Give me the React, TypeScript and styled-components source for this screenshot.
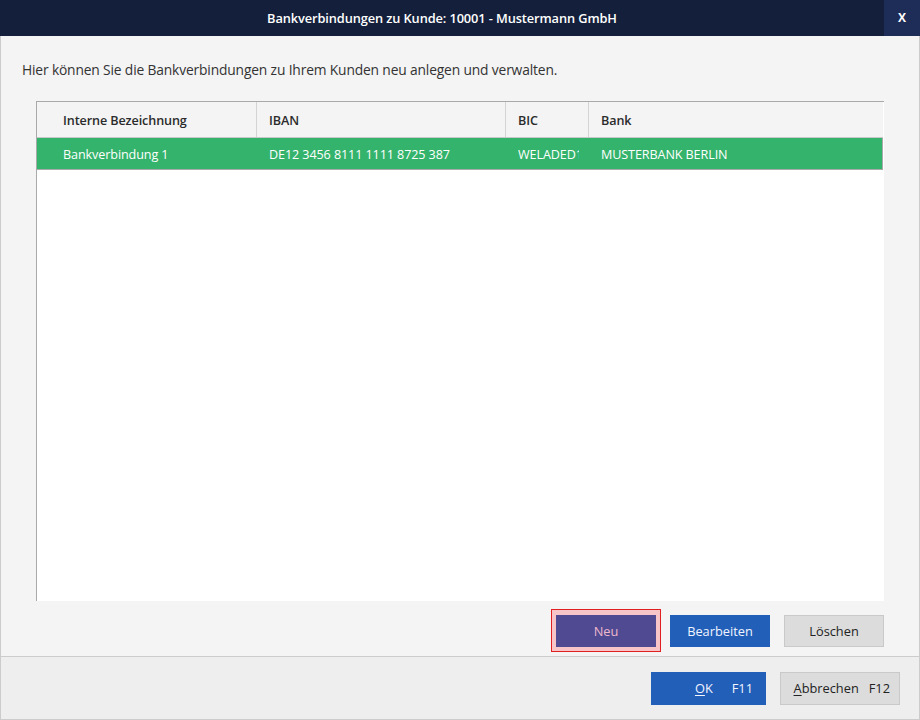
import React from "react";
import styled, { createGlobalStyle } from "styled-components";

const Global = createGlobalStyle`
  html, body { margin: 0; padding: 0; background: #f4f4f4; }
  body { font-family: "Open Sans", "Noto Sans", "Liberation Sans", sans-serif; }
  * { box-sizing: border-box; }
`;

const Window = styled.div`
  width: 920px;
  height: 720px;
  display: flex;
  flex-direction: column;
  font-family: "Open Sans", "Noto Sans", "Liberation Sans", sans-serif;
`;

const TitleBar = styled.div`
  height: 36px;
  flex: none;
  background: #141f3b;
  display: grid;
  grid-template-columns: 1fr 36px;
  align-items: stretch;
`;

const Title = styled.div`
  color: #ffffff;
  font-size: 12.8px;
  font-weight: 600;
  display: flex;
  align-items: center;
  justify-content: center;
  letter-spacing: -0.1px;
`;

const CloseButton = styled.button`
  border: none;
  margin: 0;
  padding: 0 0 1px 0;
  background: #1e2c58;
  color: #ffffff;
  font-family: inherit;
  font-size: 12px;
  font-weight: 700;
  display: flex;
  align-items: center;
  justify-content: center;
  cursor: pointer;
`;

const Body = styled.div`
  flex: 1;
  background: #f4f4f4;
  border-left: 1px solid #cccccc;
  border-right: 1px solid #cccccc;
  display: flex;
  flex-direction: column;
  padding: 0 35px 0 35px;
`;

const Description = styled.p`
  margin: 24px 0 0 -14px;
  height: 41px;
  font-size: 13.8px;
  color: #333333;
  line-height: 20px;
  letter-spacing: -0.15px;
`;

const TableBox = styled.div`
  height: 500px;
  flex: none;
  background: #ffffff;
  border-top: 1px solid #a9a9a9;
  border-left: 1px solid #a9a9a9;
  display: flex;
  flex-direction: column;
`;

const columns = "220px 249px 83px 1fr";

const HeaderRow = styled.div`
  display: grid;
  grid-template-columns: ${columns};
  height: 36px;
  background: #f4f4f4;
  border-bottom: 1px solid #c8c8c8;
  margin-right: 1px;
`;

const HeaderCell = styled.div<{ $first?: boolean; $last?: boolean }>`
  display: flex;
  align-items: center;
  padding-top: 2px;
  padding-left: ${(p) => (p.$first ? "26px" : "12px")};
  border-right: ${(p) => (p.$last ? "none" : "1px solid #d4d4d4")};
  font-size: 12.6px;
  font-weight: 600;
  color: #2b2b2b;
  letter-spacing: -0.1px;
`;

const DataRow = styled.div<{ $selected?: boolean }>`
  display: grid;
  grid-template-columns: ${columns};
  height: 32px;
  margin-right: 1px;
  background: ${(p) => (p.$selected ? "#33b36b" : "#ffffff")};
  border-right: 1px solid #a9a9a9;
  border-bottom: 1px solid #a9a9a9;
`;

const DataCell = styled.div<{ $first?: boolean; $selected?: boolean }>`
  display: flex;
  align-items: center;
  min-width: 0;
  padding-top: 1px;
  padding-left: ${(p) => (p.$first ? "26px" : "12px")};
  padding-right: 10px;
  font-size: 12.6px;
  color: ${(p) => (p.$selected ? "#ffffff" : "#333333")};
  letter-spacing: -0.1px;
`;

const CellText = styled.span`
  display: block;
  white-space: nowrap;
  overflow: hidden;
  min-width: 0;
`;

const ActionRow = styled.div`
  display: flex;
  justify-content: flex-end;
  align-items: flex-start;
  gap: 14px;
  flex: 1;
  padding-top: 14px;
`;

const FocusRing = styled.div`
  border: 1px solid #e02020;
  background: #f7c4c8;
  padding: 5px 4px 4px 4px;
  margin: -6px -5px 0 -5px;
`;

const Button = styled.button<{ $variant: "primary" | "accent" | "neutral"; $w: number }>`
  width: ${(p) => p.$w}px;
  height: 32px;
  margin: 0;
  font-family: inherit;
  font-size: 12.8px;
  font-weight: 500;
  cursor: pointer;
  display: flex;
  align-items: center;
  justify-content: center;
  padding: 0;
  border: 1px solid
    ${(p) => (p.$variant === "neutral" ? "#c9c9c9" : p.$variant === "accent" ? "#4f4a92" : "#215fb8")};
  background: ${(p) =>
    p.$variant === "neutral" ? "#dcdcdc" : p.$variant === "accent" ? "#4f4a92" : "#215fb8"};
  color: ${(p) =>
    p.$variant === "neutral" ? "#222222" : p.$variant === "accent" ? "#efb8cc" : "#f2f4ff"};
`;

const Footer = styled.div`
  height: 64px;
  flex: none;
  background: #eeeeee;
  border: 1px solid #cccccc;
  display: flex;
  justify-content: flex-end;
  align-items: center;
  gap: 14px;
  padding: 0 19px 0 0;
`;

const FooterButton = styled(Button)<{ $gap: number }>`
  justify-content: flex-end;
  gap: ${(p) => p.$gap}px;
  padding-right: ${(p) => (p.$gap > 15 ? 12 : 9)}px;
  height: 33px;
`;

const Key = styled.span`
  font-weight: 400;
`;

const Mnemonic = styled.span`
  text-decoration: underline;
  text-underline-offset: 2px;
`;

export default function App() {
  return (
    <>
      <Global />
      <Window>
        <TitleBar>
          <Title>Bankverbindungen zu Kunde: 10001 - Mustermann GmbH</Title>
          <CloseButton aria-label="Schließen">X</CloseButton>
        </TitleBar>
        <Body>
          <Description>Hier können Sie die Bankverbindungen zu Ihrem Kunden neu anlegen und verwalten.</Description>
          <TableBox>
            <HeaderRow>
              <HeaderCell $first>Interne Bezeichnung</HeaderCell>
              <HeaderCell>IBAN</HeaderCell>
              <HeaderCell>BIC</HeaderCell>
              <HeaderCell $last>Bank</HeaderCell>
            </HeaderRow>
            <DataRow $selected>
              <DataCell $first $selected><CellText>Bankverbindung 1</CellText></DataCell>
              <DataCell $selected><CellText>DE12 3456 8111 1111 8725 387</CellText></DataCell>
              <DataCell $selected><CellText>WELADED1</CellText></DataCell>
              <DataCell $selected><CellText>MUSTERBANK BERLIN</CellText></DataCell>
            </DataRow>
          </TableBox>
          <ActionRow>
            <FocusRing>
              <Button $variant="accent" $w={100}>Neu</Button>
            </FocusRing>
            <Button $variant="primary" $w={100}>Bearbeiten</Button>
            <Button $variant="neutral" $w={100}>Löschen</Button>
          </ActionRow>
        </Body>
        <Footer>
          <FooterButton $variant="primary" $w={115} $gap={19}>
            <span><Mnemonic>O</Mnemonic>K</span>
            <Key>F11</Key>
          </FooterButton>
          <FooterButton $variant="neutral" $w={120} $gap={10}>
            <span><Mnemonic>A</Mnemonic>bbrechen</span>
            <Key>F12</Key>
          </FooterButton>
        </Footer>
      </Window>
    </>
  );
}
